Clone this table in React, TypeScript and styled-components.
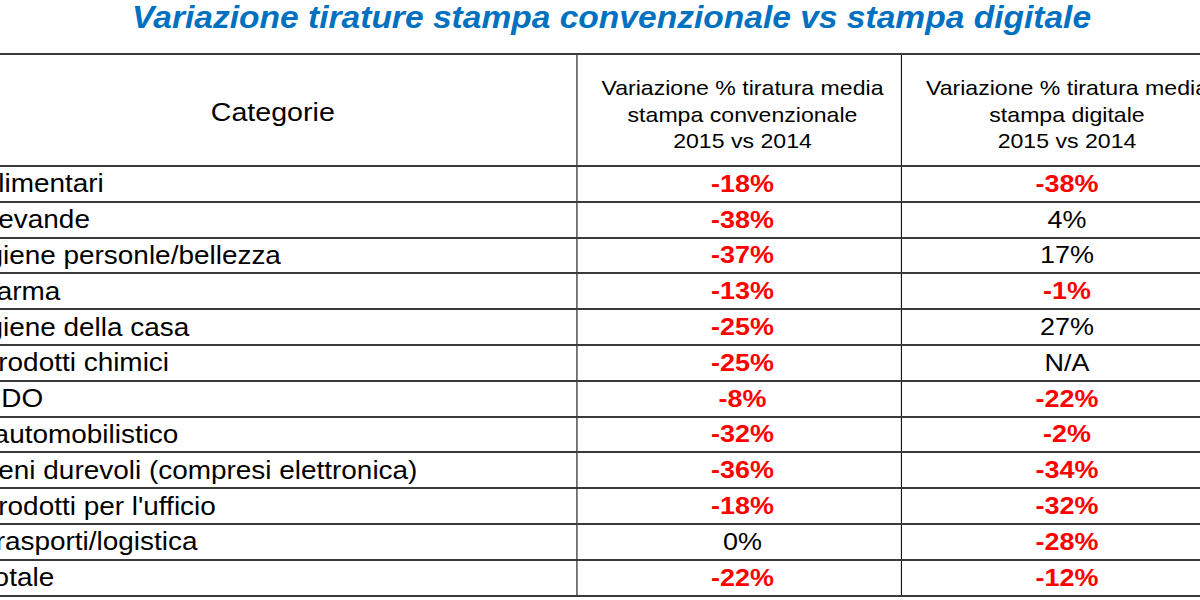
import styled, { createGlobalStyle } from "styled-components";

const GlobalStyle = createGlobalStyle`
    html, body {
        margin: 0;
        padding: 0;
        background: #ffffff;
        overflow: hidden;
    }
    body {
        font-family: "Liberation Sans", Arial, sans-serif;
        color: #000000;
    }
`;

// the source slide is slightly stretched sideways, so the whole page is too
const Stage = styled.div`
    width: 1091px;
    transform: scaleX(1.1);
    transform-origin: 0 0;
`;

const Title = styled.h1`
    margin: 0;
    height: 53px;
    padding-left: 21px;
    text-align: center;
    font-size: 30.5px;
    line-height: 34px;
    font-weight: bold;
    font-style: italic;
    color: #0070c0;
    white-space: nowrap;
`;

const Table = styled.div`
    margin-left: -28px;
    width: 1142px;
`;

const Row = styled.div<{ $head?: boolean }>`
    display: grid;
    grid-template-columns: 552px 295px 295px;
    height: ${(p) => (p.$head ? "110px" : "33.8px")};
    border-bottom: 2px solid #3a3a3a;
    border-top: ${(p) => (p.$head ? "2px solid #3a3a3a" : "none")};
`;

const Category = styled.div<{ $head?: boolean }>`
    display: flex;
    align-items: center;
    justify-content: ${(p) => (p.$head ? "center" : "flex-start")};
    padding: ${(p) => (p.$head ? "4px 0 0 0" : "0 0 0 9.5px")};
    font-size: ${(p) => (p.$head ? "26px" : "25.4px")};
    white-space: nowrap;
    overflow: hidden;
`;

const HeadCell = styled.div`
    display: flex;
    align-items: center;
    justify-content: center;
    padding: 10px 0 0 6px;
    border-left: 1px solid #111111;
    font-size: 21px;
    line-height: 26.5px;
    text-align: center;
    white-space: nowrap;
`;

const Value = styled.div<{ $neg: boolean }>`
    display: flex;
    align-items: center;
    justify-content: center;
    padding-left: 6px;
    border-left: 1px solid #111111;
    font-size: 24.5px;
    font-weight: ${(p) => (p.$neg ? "bold" : "normal")};
    color: ${(p) => (p.$neg ? "#ff0000" : "#000000")};
`;

const rows: [string, string, string][] = [
    ["Alimentari", "-18%", "-38%"],
    ["Bevande", "-38%", "4%"],
    ["Igiene personle/bellezza", "-37%", "17%"],
    ["Farma", "-13%", "-1%"],
    ["Igiene della casa", "-25%", "27%"],
    ["Prodotti chimici", "-25%", "N/A"],
    ["GDO", "-8%", "-22%"],
    ["\u2002automobilistico", "-32%", "-2%"],
    ["Beni durevoli (compresi elettronica)", "-36%", "-34%"],
    ["Prodotti per l'ufficio", "-18%", "-32%"],
    ["Trasporti/logistica", "0%", "-28%"],
    ["Totale", "-22%", "-12%"],
];

const isNeg = (v: string) => v.startsWith("-");

const App = () => {
    return (
        <>
            <GlobalStyle />
            <Stage>
                <Title>
                    Variazione tirature stampa convenzionale vs stampa digitale
                </Title>
                <Table>
                    <Row $head>
                        <Category $head>Categorie</Category>
                        <HeadCell>
                            Variazione % tiratura media
                            <br />
                            stampa convenzionale
                            <br />
                            2015 vs 2014
                        </HeadCell>
                        <HeadCell>
                            Variazione % tiratura media
                            <br />
                            stampa digitale
                            <br />
                            2015 vs 2014
                        </HeadCell>
                    </Row>
                    {rows.map(([name, conv, dig]) => (
                        <Row key={name}>
                            <Category>{name}</Category>
                            <Value $neg={isNeg(conv)}>{conv}</Value>
                            <Value $neg={isNeg(dig)}>{dig}</Value>
                        </Row>
                    ))}
                </Table>
            </Stage>
        </>
    );
};

export default App;
